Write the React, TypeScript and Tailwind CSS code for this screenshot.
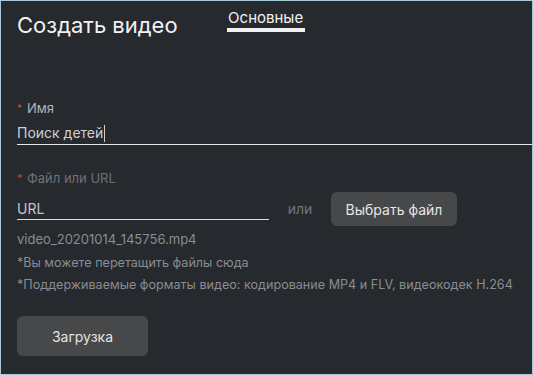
export default function App() {
  return (
    <div className="w-[533px] h-[375px] border border-[#a6c8d8] bg-[#26292e] overflow-hidden" style={{ fontFamily: "Inter, 'Noto Sans', sans-serif" }}>
      <div className="flex items-start pl-[16px] pt-[8px]">
        <div className="text-[22px] leading-[28px] text-[#f2f2f2] mt-[2px]">Создать видео</div>
        <div className="ml-[49px] flex flex-col items-center">
          <div className="text-[15px] leading-[18px] text-[#f2f2f2] px-[1px]">Основные</div>
          <div className="w-[78px] h-[4px] bg-[#f2f2f2] mt-[1px]" />
        </div>
      </div>

      <div className="pl-[16px] mt-[61px]">
        <div className="flex items-center text-[13px] leading-[16px] text-[#b4b6b9]">
          <span className="text-[#d9442c] text-[10px] mr-[5px]">*</span>Имя
        </div>
        <div className="mt-[8px] border-b border-[#e8e8e8] pb-[2px] flex items-center">
          <span className="text-[14px] leading-[18px] text-[#cfd0d2]">Поиск детей</span>
          <span className="w-[1px] h-[17px] bg-[#d0d1d3] ml-[1px]" />
        </div>

        <div className="mt-[25px] flex items-center text-[13px] leading-[16px] text-[#6e7176]">
          <span className="text-[#d9442c] text-[10px] mr-[5px]">*</span>Файл или URL
        </div>

        <div className="mt-[6px] flex items-start h-[34px]">
          <div className="w-[252px] mt-[8px] border-b border-[#dcdcdc] pb-[1px]">
            <div className="text-[14px] leading-[18px] text-[#c4c5c8]">URL</div>
          </div>
          <div className="w-[62px] mt-[8px] text-center text-[14px] leading-[18px] text-[#73767b]">или</div>
          <div className="w-[126px] h-[34px] rounded-[6px] bg-[#47484a] flex items-center justify-center text-[14px] text-[#e4e4e4]">
            Выбрать файл
          </div>
        </div>

        <div className="mt-[5px] text-[13px] leading-[16px] text-[#8a8d92]">video_20201014_145756.mp4</div>
        <div className="mt-[8px] text-[12.6px] leading-[16px] text-[#8a8d92]">*Вы можете перетащить файлы сюда</div>
        <div className="mt-[6px] text-[12.6px] leading-[16px] text-[#8a8d92] whitespace-nowrap">*Поддерживаемые форматы видео: кодирование MP4 и FLV, видеокодек H.264</div>

        <div className="mt-[23px] w-[131px] h-[40px] rounded-[6px] bg-[#47484a] flex items-center justify-center text-[14px] text-[#e4e4e4]">
          Загрузка
        </div>
      </div>
    </div>
  );
}
